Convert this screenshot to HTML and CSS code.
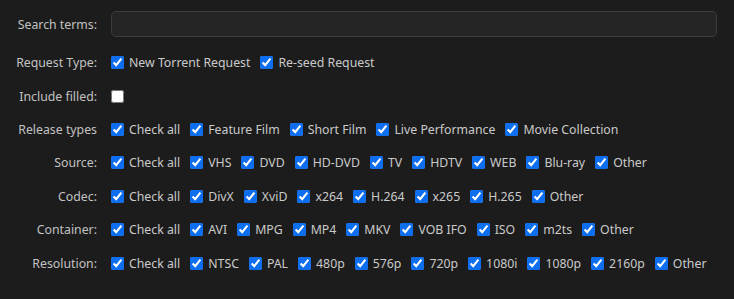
FILE: index.html
```html
<!DOCTYPE html>
<html lang="en">
<head>
  <meta charset="UTF-8" />
  <title>Search Requests</title>
  <link rel="stylesheet" href="styles.css">
</head>
<body>
  <form class="search">
    <div class="row first">
      <label class="name" for="terms">Search terms:</label>
      <div class="field"><input type="text" id="terms" class="text" /></div>
    </div>

    <div class="row">
      <span class="name">Request Type:</span>
      <div class="field">
        <label class="opt"><input type="checkbox" checked> New Torrent Request</label>
        <label class="opt"><input type="checkbox" checked> Re-seed Request</label>
      </div>
    </div>

    <div class="row">
      <span class="name">Include filled:</span>
      <div class="field">
        <label class="opt"><input type="checkbox"></label>
      </div>
    </div>

    <div class="row">
      <span class="name">Release types</span>
      <div class="field">
        <label class="opt"><input type="checkbox" checked> Check all</label>
        <label class="opt"><input type="checkbox" checked> Feature Film</label>
        <label class="opt"><input type="checkbox" checked> Short Film</label>
        <label class="opt"><input type="checkbox" checked> Live Performance</label>
        <label class="opt"><input type="checkbox" checked> Movie Collection</label>
      </div>
    </div>

    <div class="row">
      <span class="name">Source:</span>
      <div class="field">
        <label class="opt"><input type="checkbox" checked> Check all</label>
        <label class="opt"><input type="checkbox" checked> VHS</label>
        <label class="opt"><input type="checkbox" checked> DVD</label>
        <label class="opt"><input type="checkbox" checked> HD-DVD</label>
        <label class="opt"><input type="checkbox" checked> TV</label>
        <label class="opt"><input type="checkbox" checked> HDTV</label>
        <label class="opt"><input type="checkbox" checked> WEB</label>
        <label class="opt"><input type="checkbox" checked> Blu-ray</label>
        <label class="opt"><input type="checkbox" checked> Other</label>
      </div>
    </div>

    <div class="row">
      <span class="name">Codec:</span>
      <div class="field">
        <label class="opt"><input type="checkbox" checked> Check all</label>
        <label class="opt"><input type="checkbox" checked> DivX</label>
        <label class="opt"><input type="checkbox" checked> XviD</label>
        <label class="opt"><input type="checkbox" checked> x264</label>
        <label class="opt"><input type="checkbox" checked> H.264</label>
        <label class="opt"><input type="checkbox" checked> x265</label>
        <label class="opt"><input type="checkbox" checked> H.265</label>
        <label class="opt"><input type="checkbox" checked> Other</label>
      </div>
    </div>

    <div class="row">
      <span class="name">Container:</span>
      <div class="field">
        <label class="opt"><input type="checkbox" checked> Check all</label>
        <label class="opt"><input type="checkbox" checked> AVI</label>
        <label class="opt"><input type="checkbox" checked> MPG</label>
        <label class="opt"><input type="checkbox" checked> MP4</label>
        <label class="opt"><input type="checkbox" checked> MKV</label>
        <label class="opt"><input type="checkbox" checked> VOB IFO</label>
        <label class="opt"><input type="checkbox" checked> ISO</label>
        <label class="opt"><input type="checkbox" checked> m2ts</label>
        <label class="opt"><input type="checkbox" checked> Other</label>
      </div>
    </div>

    <div class="row">
      <span class="name">Resolution:</span>
      <div class="field">
        <label class="opt"><input type="checkbox" checked> Check all</label>
        <label class="opt"><input type="checkbox" checked> NTSC</label>
        <label class="opt"><input type="checkbox" checked> PAL</label>
        <label class="opt"><input type="checkbox" checked> 480p</label>
        <label class="opt"><input type="checkbox" checked> 576p</label>
        <label class="opt"><input type="checkbox" checked> 720p</label>
        <label class="opt"><input type="checkbox" checked> 1080i</label>
        <label class="opt"><input type="checkbox" checked> 1080p</label>
        <label class="opt"><input type="checkbox" checked> 2160p</label>
        <label class="opt"><input type="checkbox" checked> Other</label>
      </div>
    </div>
  </form>
</body>
</html>
```

FILE: styles.css
```css
body {
  margin: 0;
  background: #1c1c1c;
  color: #c8c8c8;
  font-family: "Noto Sans", "Open Sans", sans-serif;
  font-size: 12.3px;
}
.search {
  padding: 7px 17px 0 0;
}
.row {
  display: flex;
  align-items: center;
  min-height: 33.4px;
}
.row.first {
  min-height: 34px;
  margin-bottom: 5px;
}
.name {
  width: 97px;
  flex: none;
  text-align: right;
  color: #c2c2c2;
}
.field {
  flex: 1;
  display: flex;
  align-items: center;
  margin-left: 14px;
}
.text {
  width: 100%;
  height: 26px;
  box-sizing: border-box;
  background: #252525;
  border: 1px solid #3c3c3c;
  border-radius: 5px;
  color: #ddd;
}
.opt {
  display: flex;
  align-items: center;
  gap: 5px;
  margin-right: 10px;
  color: #cacaca;
}
.opt input {
  margin: 0;
  width: 13px;
  height: 13px;
  accent-color: #0d6ef0;
}
```
